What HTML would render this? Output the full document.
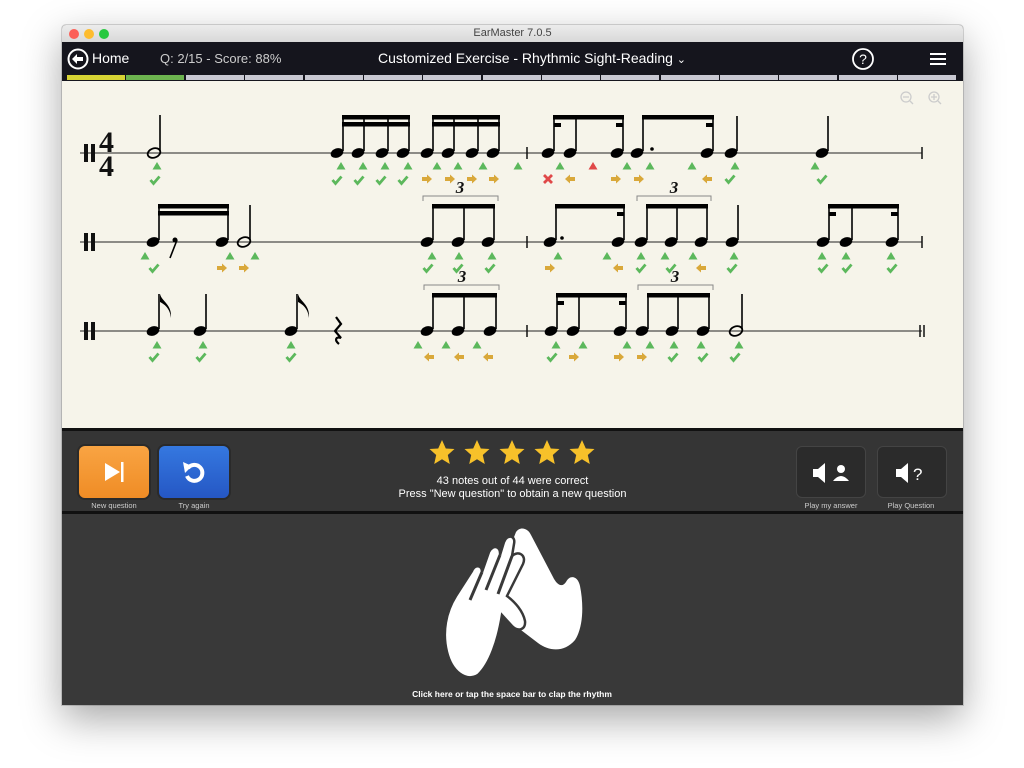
<!DOCTYPE html>
<html><head><meta charset="utf-8">
<style>
*{margin:0;padding:0;box-sizing:border-box}
body{width:1024px;height:768px;background:#fff;position:relative;overflow:hidden;font-family:"Liberation Sans",Arial,sans-serif}
.win{position:absolute;left:62px;top:25px;width:901px;height:680px;background:#3a3a3a;box-shadow:0 14px 40px rgba(0,0,0,.35),0 0 0 1px rgba(0,0,0,.15);overflow:hidden;border-radius:4px 4px 0 0}
.tb{position:absolute;left:0;top:0;width:901px;height:17px;background:linear-gradient(#ececec,#d8d8d8);font-size:11px;color:#444;text-align:center;line-height:17px}
.dot{position:absolute;top:4px;width:10px;height:10px;border-radius:50%}
.nav{position:absolute;left:0;top:17px;width:901px;height:33px;background:#15151d;color:#fff}
.prog{position:absolute;left:0;top:50px;width:901px;height:6px;background:#15151d}
.seg{position:absolute;top:0;height:5px;width:58px;background:#c8c8d2}
.score{position:absolute;left:0;top:56px;width:901px;height:347px;background:#f6f4ea}
.ctrl{position:absolute;left:0;top:403px;width:901px;height:86px;background:#353535;border-top:3px solid #111;border-bottom:3px solid #111}
.btn{position:absolute;top:15px;width:70px;height:52px;border-radius:6px}
.lab{position:absolute;top:70px;width:100px;text-align:center;font-size:7.5px;color:#ccc}
.bot{position:absolute;left:0;top:489px;width:901px;height:191px;background:#393939}
</style></head><body>
<div class="win">
 <div class="tb">EarMaster 7.0.5
  <div class="dot" style="left:7px;background:#fc5f57"></div>
  <div class="dot" style="left:22px;background:#fdbc2e"></div>
  <div class="dot" style="left:37px;background:#28c840"></div>
 </div>
 <div class="nav">
  <svg style="position:absolute;left:5px;top:6px" width="22" height="22" viewBox="0 0 22 22"><circle cx="11" cy="11" r="9.5" fill="none" stroke="#fff" stroke-width="2"/><path d="M5 11 L10 6 L10 9 L16 9 L16 13 L10 13 L10 16 Z" fill="#fff"/></svg>
  <div style="position:absolute;left:30px;top:8px;font-size:14px">Home</div>
  <div style="position:absolute;left:98px;top:9px;font-size:13px;color:#ccc">Q: 2/15 - Score: 88%</div>
  <div style="position:absolute;left:316px;top:8px;font-size:14px">Customized Exercise - Rhythmic Sight-Reading <span style="font-size:11px">&#8964;</span></div>
  <svg style="position:absolute;left:789px;top:5px" width="24" height="24" viewBox="0 0 24 24"><circle cx="12" cy="12" r="10" fill="none" stroke="#fff" stroke-width="1.8"/><text x="12" y="17" text-anchor="middle" fill="#fff" font-size="14" font-family="Liberation Sans">?</text></svg>
  <div style="position:absolute;left:868px;top:11px;width:16px;height:2px;background:#fff;box-shadow:0 5px 0 #fff,0 10px 0 #fff"></div>
 </div>
 <div class="prog">
  <div class="seg" style="left:5px;background:#d6d334"></div>
  <div class="seg" style="left:64px;background:#6cb34f"></div>
  <div class="seg" style="left:124px"></div><div class="seg" style="left:183px"></div><div class="seg" style="left:243px"></div><div class="seg" style="left:302px"></div><div class="seg" style="left:361px"></div><div class="seg" style="left:421px"></div><div class="seg" style="left:480px"></div><div class="seg" style="left:539px"></div><div class="seg" style="left:599px"></div><div class="seg" style="left:658px"></div><div class="seg" style="left:717px"></div><div class="seg" style="left:777px"></div><div class="seg" style="left:836px"></div>
 </div>
 <div class="score">
 <svg width="901" height="347" viewBox="62 81 901 347" style="position:absolute;left:0;top:0">
  <defs>
   <ellipse id="h" cx="0" cy="0" rx="6.5" ry="4.6" transform="rotate(-20)" fill="#000"/>
   <g id="ho"><ellipse cx="0" cy="0" rx="6.5" ry="4.6" transform="rotate(-20)" fill="none" stroke="#000" stroke-width="1.8"/></g>
   <polygon id="t" points="0,-4 4.5,3.5 -4.5,3.5" fill="#5cb85c"/>
   <polygon id="tr" points="0,-4 4.5,3.5 -4.5,3.5" fill="#e04848"/>
   <path id="c" d="M-4.5,0 L-1.5,3.5 L4.5,-3.5" fill="none" stroke="#5cb85c" stroke-width="2.8"/>
   <path id="ar" d="M-5,-2 L0,-2 L0,-4.5 L5,0 L0,4.5 L0,2 L-5,2 Z" fill="#d9a83a"/>
   <path id="al" d="M5,-2 L0,-2 L0,-4.5 L-5,0 L0,4.5 L0,2 L5,2 Z" fill="#d9a83a"/>
   <path id="x" d="M-4,-4 L4,4 M4,-4 L-4,4" stroke="#e04848" stroke-width="2.8"/>
  </defs>
  <g stroke="#222" stroke-width="1.1">
   <line x1="80" y1="153" x2="922" y2="153"/><line x1="80" y1="242" x2="922" y2="242"/><line x1="80" y1="331" x2="922" y2="331"/>
  </g>
  <g fill="#111">
   <rect x="84" y="144" width="4" height="18"/><rect x="91" y="144" width="4" height="18"/>
   <rect x="84" y="233" width="4" height="18"/><rect x="91" y="233" width="4" height="18"/>
   <rect x="84" y="322" width="4" height="18"/><rect x="91" y="322" width="4" height="18"/>
   <text x="99" y="152" font-family="Liberation Serif" font-weight="bold" font-size="30">4</text>
   <text x="99" y="176" font-family="Liberation Serif" font-weight="bold" font-size="30">4</text>
  </g>
  <g stroke="#111" stroke-width="1.5">
   <line x1="527" y1="147" x2="527" y2="159"/><line x1="922" y1="147" x2="922" y2="159"/>
   <line x1="527" y1="236" x2="527" y2="248"/><line x1="922" y1="236" x2="922" y2="248"/>
   <line x1="527" y1="325" x2="527" y2="337"/><line x1="920" y1="325" x2="920" y2="337"/><line x1="924" y1="325" x2="924" y2="337"/>
  </g>
  <!-- row1 -->
  <use href="#ho" x="154" y="153"/>
  <g stroke="#000" stroke-width="1.6">
   <line x1="160" y1="151" x2="160" y2="115"/>
   <line x1="343" y1="151" x2="343" y2="115"/><line x1="364" y1="151" x2="364" y2="115"/><line x1="388" y1="151" x2="388" y2="115"/><line x1="409" y1="151" x2="409" y2="115"/>
   <line x1="433" y1="151" x2="433" y2="115"/><line x1="454" y1="151" x2="454" y2="115"/><line x1="478" y1="151" x2="478" y2="115"/><line x1="499" y1="151" x2="499" y2="115"/>
   <line x1="554" y1="151" x2="554" y2="115"/><line x1="576" y1="151" x2="576" y2="115"/><line x1="623" y1="151" x2="623" y2="115"/>
   <line x1="643" y1="151" x2="643" y2="115"/><line x1="713" y1="151" x2="713" y2="115"/><line x1="737" y1="151" x2="737" y2="116"/><line x1="828" y1="151" x2="828" y2="116"/>
  </g>
  <g fill="#000">
   <rect x="342" y="115" width="68" height="4.5"/><rect x="342" y="122" width="68" height="4.5"/>
   <rect x="432" y="115" width="68" height="4.5"/><rect x="432" y="122" width="68" height="4.5"/>
   <rect x="553" y="115" width="71" height="4.5"/><rect x="554" y="123" width="7" height="4"/><rect x="616" y="123" width="7" height="4"/>
   <rect x="642" y="115" width="72" height="4.5"/><rect x="706" y="123" width="7" height="4"/>
   <circle cx="652" cy="149" r="1.8"/>
  </g>
  <use href="#h" x="337" y="153"/><use href="#h" x="358" y="153"/><use href="#h" x="382" y="153"/><use href="#h" x="403" y="153"/>
  <use href="#h" x="427" y="153"/><use href="#h" x="448" y="153"/><use href="#h" x="472" y="153"/><use href="#h" x="493" y="153"/>
  <use href="#h" x="548" y="153"/><use href="#h" x="570" y="153"/><use href="#h" x="617" y="153"/><use href="#h" x="637" y="153"/><use href="#h" x="707" y="153"/><use href="#h" x="731" y="153"/><use href="#h" x="822" y="153"/>
  <use href="#t" x="157" y="166"/><use href="#c" x="155" y="180"/>
  <use href="#t" x="341" y="166"/><use href="#t" x="363" y="166"/><use href="#t" x="385" y="166"/><use href="#t" x="408" y="166"/>
  <use href="#c" x="337" y="180"/><use href="#c" x="359" y="180"/><use href="#c" x="381" y="180"/><use href="#c" x="403" y="180"/>
  <use href="#t" x="437" y="166"/><use href="#t" x="458" y="166"/><use href="#t" x="483" y="166"/><use href="#t" x="518" y="166"/>
  <use href="#ar" x="427" y="179"/><use href="#ar" x="450" y="179"/><use href="#ar" x="472" y="179"/><use href="#ar" x="494" y="179"/>
  <use href="#t" x="560" y="166"/><use href="#tr" x="593" y="166"/><use href="#t" x="627" y="166"/><use href="#t" x="650" y="166"/><use href="#t" x="692" y="166"/><use href="#t" x="735" y="166"/><use href="#t" x="815" y="166"/>
  <use href="#x" x="548" y="179"/><use href="#al" x="570" y="179"/><use href="#ar" x="616" y="179"/><use href="#ar" x="639" y="179"/><use href="#al" x="707" y="179"/><use href="#c" x="730" y="179"/><use href="#c" x="822" y="179"/>
  <!-- row2 -->
  <g stroke="#000" stroke-width="1.6">
   <line x1="159" y1="240" x2="159" y2="205"/><line x1="228" y1="240" x2="228" y2="205"/><line x1="250" y1="240" x2="250" y2="205"/>
   <line x1="433" y1="240" x2="433" y2="205"/><line x1="464" y1="240" x2="464" y2="205"/><line x1="494" y1="240" x2="494" y2="205"/>
   <line x1="556" y1="240" x2="556" y2="205"/><line x1="624" y1="240" x2="624" y2="205"/>
   <line x1="647" y1="240" x2="647" y2="205"/><line x1="677" y1="240" x2="677" y2="205"/><line x1="707" y1="240" x2="707" y2="205"/><line x1="738" y1="240" x2="738" y2="205"/>
   <line x1="829" y1="240" x2="829" y2="205"/><line x1="852" y1="240" x2="852" y2="205"/><line x1="898" y1="240" x2="898" y2="205"/>
   <path d="M177 240 L170 258" />
  </g>
  <g fill="#000">
   <rect x="158" y="204" width="71" height="4.5"/><rect x="158" y="211" width="71" height="4.5"/>
   <rect x="432" y="204" width="63" height="4.5"/>
   <rect x="555" y="204" width="70" height="4.5"/><rect x="617" y="212" width="7" height="4"/><circle cx="562" cy="238" r="1.8"/>
   <rect x="646" y="204" width="62" height="4.5"/>
   <rect x="828" y="204" width="71" height="4.5"/><rect x="829" y="212" width="7" height="4"/><rect x="891" y="212" width="7" height="4"/>
   <circle cx="175" cy="240" r="2.5"/>
  </g>
  <use href="#h" x="153" y="242"/><use href="#h" x="222" y="242"/><use href="#ho" x="244" y="242"/>
  <use href="#h" x="427" y="242"/><use href="#h" x="458" y="242"/><use href="#h" x="488" y="242"/>
  <use href="#h" x="550" y="242"/><use href="#h" x="618" y="242"/><use href="#h" x="641" y="242"/><use href="#h" x="671" y="242"/><use href="#h" x="701" y="242"/><use href="#h" x="732" y="242"/>
  <use href="#h" x="823" y="242"/><use href="#h" x="846" y="242"/><use href="#h" x="892" y="242"/>
  <g fill="none" stroke="#888" stroke-width="1"><path d="M423 201 V196 H498 V201"/><path d="M637 201 V196 H711 V201"/><path d="M424 290 V285 H499 V290"/><path d="M638 290 V285 H713 V290"/></g>
  <g font-family="Liberation Serif" font-style="italic" font-weight="bold" font-size="17" fill="#111" text-anchor="middle"><text x="460" y="193">3</text><text x="674" y="193">3</text><text x="462" y="282">3</text><text x="675" y="282">3</text></g>
  <use href="#t" x="145" y="256"/><use href="#c" x="154" y="268"/><use href="#t" x="230" y="256"/><use href="#t" x="255" y="256"/><use href="#ar" x="222" y="268"/><use href="#ar" x="244" y="268"/>
  <use href="#t" x="432" y="256"/><use href="#t" x="459" y="256"/><use href="#t" x="492" y="256"/><use href="#c" x="428" y="268"/><use href="#c" x="458" y="268"/><use href="#c" x="490" y="268"/>
  <use href="#t" x="558" y="256"/><use href="#t" x="607" y="256"/><use href="#t" x="641" y="256"/><use href="#t" x="665" y="256"/><use href="#t" x="693" y="256"/><use href="#t" x="734" y="256"/>
  <use href="#ar" x="550" y="268"/><use href="#al" x="618" y="268"/><use href="#c" x="641" y="268"/><use href="#c" x="671" y="268"/><use href="#al" x="701" y="268"/><use href="#c" x="732" y="268"/>
  <use href="#t" x="822" y="256"/><use href="#t" x="846" y="256"/><use href="#t" x="891" y="256"/><use href="#c" x="823" y="268"/><use href="#c" x="847" y="268"/><use href="#c" x="892" y="268"/>
  <!-- row3 -->
  <g stroke="#000" stroke-width="1.6">
   <line x1="159" y1="329" x2="159" y2="294"/><line x1="206" y1="329" x2="206" y2="294"/><line x1="297" y1="329" x2="297" y2="294"/>
   <line x1="433" y1="329" x2="433" y2="294"/><line x1="464" y1="329" x2="464" y2="294"/><line x1="496" y1="329" x2="496" y2="294"/>
   <line x1="557" y1="329" x2="557" y2="294"/><line x1="579" y1="329" x2="579" y2="294"/><line x1="626" y1="329" x2="626" y2="294"/>
   <line x1="648" y1="329" x2="648" y2="294"/><line x1="678" y1="329" x2="678" y2="294"/><line x1="709" y1="329" x2="709" y2="294"/><line x1="742" y1="329" x2="742" y2="294"/>
  </g>
  <g fill="#000"><path d="M160 294 C162 302 172 304 171 318 C170 308 164 304 160 302 Z"/><path d="M298 294 C300 302 310 304 309 318 C308 308 302 304 298 302 Z"/></g>
  <g fill="none" stroke="#000" stroke-width="2.2"><path d="M336 317 L341 324 L335 331 L341 338 C336 336 334 340 339 344"/></g>
  <g fill="#000">
   <rect x="432" y="293" width="65" height="4.5"/><rect x="556" y="293" width="71" height="4.5"/><rect x="557" y="301" width="7" height="4"/><rect x="619" y="301" width="7" height="4"/><rect x="647" y="293" width="63" height="4.5"/>
  </g>
  <use href="#h" x="153" y="331"/><use href="#h" x="200" y="331"/><use href="#h" x="291" y="331"/>
  <use href="#h" x="427" y="331"/><use href="#h" x="458" y="331"/><use href="#h" x="490" y="331"/>
  <use href="#h" x="551" y="331"/><use href="#h" x="573" y="331"/><use href="#h" x="620" y="331"/><use href="#h" x="642" y="331"/><use href="#h" x="672" y="331"/><use href="#h" x="703" y="331"/><use href="#ho" x="736" y="331"/>
  <use href="#t" x="157" y="345"/><use href="#c" x="154" y="357"/><use href="#t" x="203" y="345"/><use href="#c" x="201" y="357"/><use href="#t" x="291" y="345"/><use href="#c" x="291" y="357"/>
  <use href="#t" x="418" y="345"/><use href="#t" x="446" y="345"/><use href="#t" x="477" y="345"/><use href="#al" x="429" y="357"/><use href="#al" x="459" y="357"/><use href="#al" x="488" y="357"/>
  <use href="#t" x="556" y="345"/><use href="#t" x="583" y="345"/><use href="#t" x="627" y="345"/><use href="#t" x="650" y="345"/><use href="#t" x="674" y="345"/><use href="#t" x="701" y="345"/><use href="#t" x="739" y="345"/>
  <use href="#c" x="552" y="357"/><use href="#ar" x="574" y="357"/><use href="#ar" x="619" y="357"/><use href="#ar" x="642" y="357"/><use href="#c" x="673" y="357"/><use href="#c" x="703" y="357"/><use href="#c" x="735" y="357"/>
  <g fill="none" stroke="#ccc" stroke-width="1.3"><circle cx="906" cy="97" r="5"/><line x1="903" y1="97" x2="909" y2="97"/><line x1="910" y1="101" x2="913" y2="104"/><circle cx="934" cy="97" r="5"/><line x1="931" y1="97" x2="937" y2="97"/><line x1="934" y1="94" x2="934" y2="100"/><line x1="938" y1="101" x2="941" y2="104"/></g>
 </svg>
 </div>
 <div class="ctrl">
  <div class="btn" style="left:17px;background:linear-gradient(#f9a443,#ef8c25);box-shadow:0 0 0 2px #2a2a2a">
   <svg width="70" height="52"><polygon points="26,17 26,35 41,26" fill="#fff"/><rect x="42" y="16" width="2.5" height="20" fill="#fff"/></svg></div>
  <div class="btn" style="left:97px;background:linear-gradient(#3578e0,#2557c4);box-shadow:0 0 0 2px #2a2a2a">
   <svg width="70" height="52"><path d="M29 22 A8 8 0 1 1 28 30" fill="none" stroke="#fff" stroke-width="4"/><polygon points="24,16 33,20 26,27" fill="#fff"/></svg></div>
  <div class="lab" style="left:2px">New question</div><div class="lab" style="left:82px">Try again</div>
  <svg style="position:absolute;left:365px;top:7px" width="170" height="30" viewBox="0 0 170 30">
   <defs><polygon id="st" points="0,-13 3.8,-4.5 12.5,-4 5.8,2 7.8,11 0,6.3 -7.8,11 -5.8,2 -12.5,-4 -3.8,-4.5" fill="#f7c12a"/></defs>
   <use href="#st" x="15" y="15"/><use href="#st" x="50" y="15"/><use href="#st" x="85" y="15"/><use href="#st" x="120" y="15"/><use href="#st" x="155" y="15"/>
  </svg>
  <div style="position:absolute;left:0;width:901px;top:44px;text-align:center;color:#fff;font-size:11px;line-height:13px">43 notes out of 44 were correct<br>Press "New question" to obtain a new question</div>
  <div class="btn" style="left:734px;background:#2b2b2b;border:1px solid #444">
   <svg width="70" height="52"><polygon points="16,22 21,22 28,16 28,36 21,30 16,30" fill="#fff"/><circle cx="44" cy="22" r="4" fill="#fff"/><path d="M36 34 Q44 24 52 34 Z" fill="#fff"/></svg></div>
  <div class="btn" style="left:815px;background:#2b2b2b;border:1px solid #444">
   <svg width="70" height="52"><polygon points="18,22 23,22 30,16 30,36 23,30 18,30" fill="#fff"/><text x="35" y="33" fill="#fff" font-size="17" font-family="Liberation Sans">?</text></svg></div>
  <div class="lab" style="left:719px">Play my answer</div><div class="lab" style="left:799px">Play Question</div>
 </div>
 <div class="bot">
  <svg style="position:absolute;left:0;top:0" width="901" height="191" viewBox="62 514 901 191">
   <path fill="#fff" d="M516 532 C520 526 528 528 531 535 L553 577 C557 585 562 588 566 582 C570 574 578 576 580 586 C584 606 583 628 575 640 C565 652 550 652 538 643 L500 614 L505 560 Z"/>
   <path fill="#fff" stroke="#393939" stroke-width="2.5" d="M447 652 C442 632 446 612 456 596 L472 571 C475 564 482 565 482 572 L489 552 C493 544 501 546 500 555 L504 542 C507 534 516 535 514 544 L512 556 C518 550 527 555 523 564 L507 596 C515 602 523 611 525 621 C526 630 518 632 512 626 L502 615 C498 640 490 664 478 675 C466 682 452 672 447 652 Z"/>
   <path fill="none" stroke="#393939" stroke-width="3" d="M482 572 L470 600 M500 555 L486 590 M512 556 L498 594"/>
   <text x="512" y="697" text-anchor="middle" fill="#fff" font-size="8.5" font-weight="bold" font-family="Liberation Sans">Click here or tap the space bar to clap the rhythm</text>
  </svg>
 </div>
</div>
</body></html>
